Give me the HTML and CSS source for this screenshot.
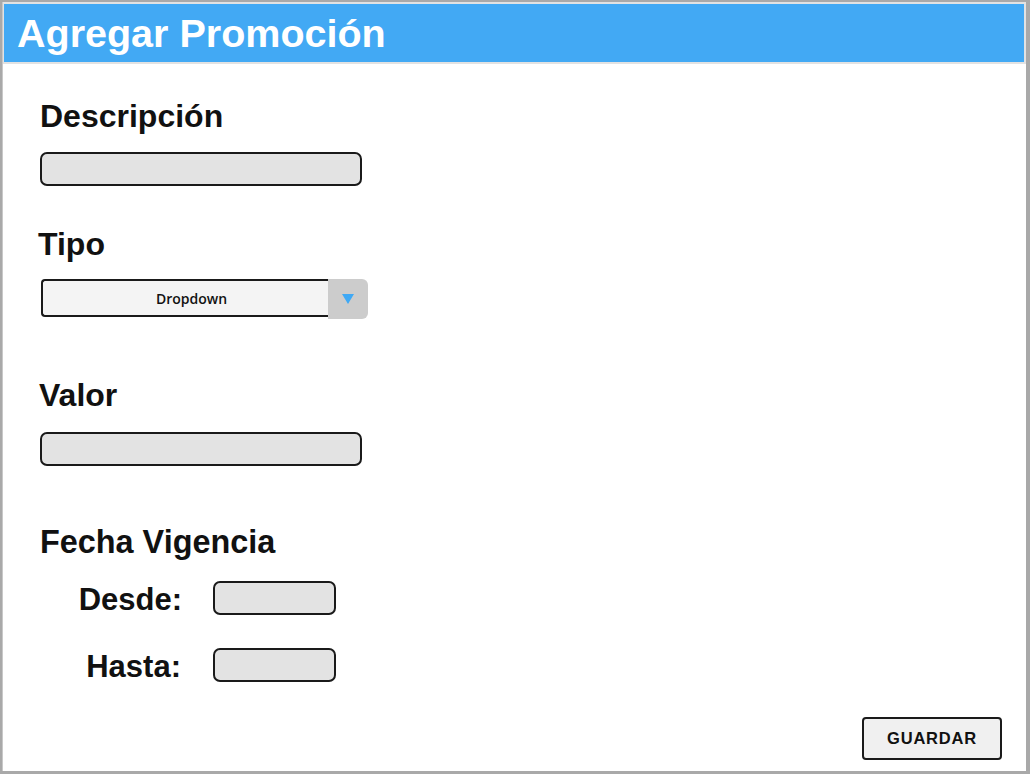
FILE: index.html
```html
<!DOCTYPE html>
<html lang="es">
<head>
<meta charset="utf-8">
<title>Agregar Promoción</title>
<link rel="stylesheet" href="styles.css">
</head>
<body>
<div class="window">
  <header class="header">
    <h1 class="title">Agregar Promoción</h1>
  </header>
  <main class="content">
    <div class="label label-desc">Descripción</div>
    <div class="input input-wide"></div>

    <div class="label label-tipo">Tipo</div>
    <div class="dropdown">
      <div class="dropdown-box">Dropdown</div>
      <div class="dropdown-btn">
        <svg width="12" height="10" viewBox="0 0 12 10"><polygon points="0,0 12,0 6,10" fill="#3fa9f5"/></svg>
      </div>
    </div>

    <div class="label label-valor">Valor</div>
    <div class="input input-wide"></div>

    <div class="label label-fecha">Fecha Vigencia</div>
    <div class="date-row date-desde">
      <span class="date-label">Desde:</span>
      <div class="input input-date"></div>
    </div>
    <div class="date-row date-hasta">
      <span class="date-label hasta">Hasta:</span>
      <div class="input input-date"></div>
    </div>
  </main>
  <footer class="footer">
    <button class="btn">GUARDAR</button>
  </footer>
</div>
</body>
</html>
```

FILE: styles.css
```css
html, body {
  margin: 0;
  padding: 0;
}
body {
  width: 1030px;
  height: 774px;
  background: #a9a9a9;
  overflow: hidden;
  font-family: "Liberation Sans", Arial, sans-serif;
  color: #111;
}
.window {
  margin: 2px 0 0 2px;
  width: 1024px;
  height: 769px;
  background: #fff;
  display: flex;
  flex-direction: column;
  box-sizing: border-box;
  border-left: 1px solid #c8c8c8;
}
.header {
  height: 58px;
  background: #42a9f4;
  border: 2px solid #e2e2e2;
  border-left-width: 1px;
  flex: none;
}
.title {
  margin: 0;
  padding-left: 13px;
  font-size: 39.5px;
  line-height: 58px;
  font-weight: bold;
  color: #fff;
}
.content {
  padding-left: 35px;
  display: flex;
  flex-direction: column;
  align-items: flex-start;
}
.label {
  font-size: 32px;
  line-height: 32px;
  font-weight: bold;
}
.label-desc { margin-top: 36px; margin-left: 2px; }
.label-tipo { margin-top: 42px; margin-left: 0; }
.label-valor { margin-top: 60px; margin-left: 1px; }
.label-fecha { margin-top: 60px; margin-left: 2px; font-size: 32.4px; }
.input {
  box-sizing: border-box;
  height: 34px;
  background: #e3e3e3;
  border: 2px solid #1a1a1a;
  border-radius: 7px;
}
.input-wide {
  width: 322px;
  margin-top: 20px;
  margin-left: 2px;
}
.label-valor + .input-wide { margin-top: 21px; }
.dropdown {
  margin-top: 19px;
  margin-left: 3px;
  display: flex;
  align-items: flex-start;
}
.dropdown-box {
  box-sizing: border-box;
  width: 287px;
  height: 38px;
  background: #f4f4f4;
  border: 2px solid #1a1a1a;
  border-right: none;
  border-radius: 4px 0 0 4px;
  display: flex;
  align-items: center;
  justify-content: center;
  padding-left: 12px;
  font-family: "Open Sans", "Liberation Sans", sans-serif;
  font-weight: 600;
  font-size: 14px;
  color: #111;
}
.dropdown-btn {
  width: 40px;
  height: 40px;
  background: #cccccc;
  border-radius: 0 6px 6px 0;
  display: flex;
  align-items: center;
  justify-content: center;
}
.date-row {
  display: grid;
  grid-template-columns: 175px 123px;
  grid-template-rows: 34px;
  align-items: center;
  height: 34px;
}
.date-desde { margin-top: 23px; }
.date-hasta { margin-top: 33px; }
.date-label {
  font-size: 31px;
  line-height: 34px;
  font-weight: bold;
  text-align: right;
  padding-top: 4px;
  padding-right: 31px;
}
.date-label.hasta { padding-right: 32px; }
.input-date { width: 123px; }
.footer {
  margin-top: auto;
  display: flex;
  justify-content: flex-end;
  padding: 0 24px 11px 0;
}
.btn {
  box-sizing: border-box;
  width: 140px;
  height: 43px;
  background: #f0f0f0;
  border: 2px solid #1a1a1a;
  border-radius: 4px;
  font-family: "Liberation Sans", Arial, sans-serif;
  font-weight: bold;
  font-size: 16.5px;
  letter-spacing: 0.8px;
  color: #111;
  padding: 0;
}
```
